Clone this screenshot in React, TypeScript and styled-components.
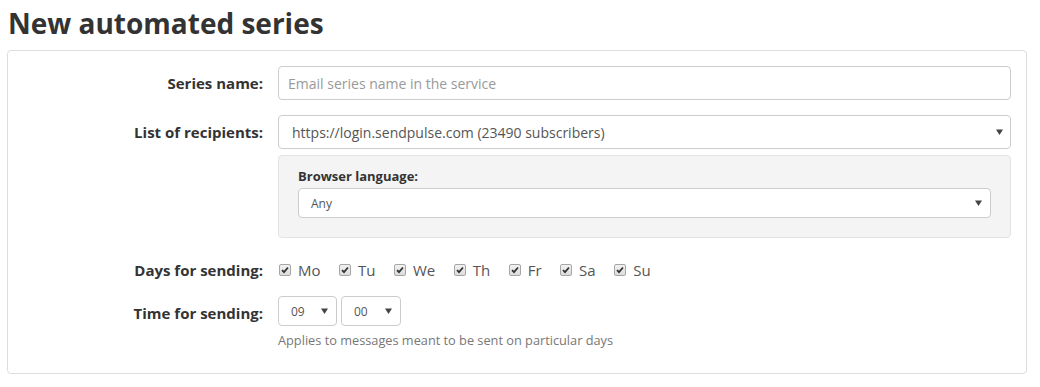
import styled, { createGlobalStyle } from "styled-components";

const Global = createGlobalStyle`
    body {
        margin: 0;
        background: #fff;
        font-family: "Open Sans", "Liberation Sans", sans-serif;
        color: #333;
    }
    * { box-sizing: border-box; }
`;

const Page = styled.div`
    padding: 4px 14px 0 7px;
`;

const Title = styled.h1`
    margin: 0 0 8px 1px;
    font-size: 28px;
    line-height: 38px;
    font-weight: 700;
    color: #333;
`;

const Card = styled.div`
    border: 1px solid #ddd;
    border-radius: 4px;
    padding: 15px 15px 24px 0;
    width: 1020px;
`;

const Row = styled.div<{ $mt?: number; $top?: boolean }>`
    display: grid;
    grid-template-columns: 255px 1fr;
    column-gap: 15px;
    align-items: ${(p) => (p.$top ? "start" : "center")};
    margin-top: ${(p) => p.$mt ?? 0}px;
`;

const Label = styled.label<{ $pt?: number }>`
    text-align: right;
    font-size: 15px;
    font-weight: 700;
    color: #333;
    line-height: 20px;
    padding-top: ${(p) => p.$pt ?? 0}px;
`;

const Control = styled.div`
    display: flex;
    flex-direction: column;
`;

const TextInput = styled.input`
    height: 34px;
    width: 100%;
    border: 1px solid #ccc;
    border-radius: 4px;
    padding: 6px 9px;
    font-family: inherit;
    font-size: 14px;
    color: #555;
    outline: none;
    &::placeholder { color: #999; }
`;

const SelectBox = styled.div<{ $small?: boolean; $w?: number }>`
    display: flex;
    align-items: center;
    justify-content: space-between;
    height: ${(p) => (p.$small ? 30 : 34)}px;
    width: ${(p) => (p.$w ? `${p.$w}px` : "100%")};
    border: 1px solid #ccc;
    border-radius: 4px;
    background: #fff;
    padding: ${(p) => (p.$small ? "0 8px 0 12px" : "0 7px 0 13px")};
    font-size: ${(p) => (p.$small ? 12 : 14)}px;
    color: #555;
`;

const Arrow = () => (
    <svg width="7" height="6" viewBox="0 0 7 6">
        <path d="M0 0.5 L7 0.5 L3.5 6 Z" fill="#444" />
    </svg>
);

const Panel = styled.div`
    margin-top: 6px;
    background: #f4f4f4;
    border: 1px solid #e3e3e3;
    border-radius: 4px;
    padding: 11px 19px 19px 19px;
`;

const PanelLabel = styled.div`
    font-size: 13px;
    font-weight: 700;
    color: #333;
    line-height: 19px;
    margin-bottom: 2px;
`;

const Days = styled.div`
    display: flex;
    align-items: center;
    gap: 17.5px;
    line-height: 20px;
`;

const Day = styled.label`
    display: flex;
    align-items: center;
    gap: 7px;
    font-size: 15px;
    color: #555;
`;

const Box = styled.span`
    display: inline-flex;
    align-items: center;
    justify-content: center;
    width: 12px;
    height: 12px;
    margin-left: 1px;
    border: 1px solid #a6a6a6;
    border-radius: 2px;
    background: linear-gradient(#f2f2f2, #dcdcdc);
`;

const TimeRow = styled.div`
    display: flex;
    gap: 4px;
`;

const Help = styled.div`
    margin-top: 5px;
    font-size: 12.75px;
    color: #777;
    line-height: 18px;
`;

const days = ["Mo", "Tu", "We", "Th", "Fr", "Sa", "Su"];

function Check() {
    return (
        <Box>
            <svg width="8" height="8" viewBox="0 0 8 8">
                <path d="M1 4.2 L3 6.2 L7 1.5" stroke="#333" strokeWidth="1.8" fill="none" />
            </svg>
        </Box>
    );
}

export default function App() {
    return (
        <Page>
            <Global />
            <Title>New automated series</Title>
            <Card>
                <Row>
                    <Label>Series name:</Label>
                    <TextInput placeholder="Email series name in the service" />
                </Row>
                <Row $mt={15} $top>
                    <Label $pt={7}>List of recipients:</Label>
                    <Control>
                        <SelectBox>
                            <span>https://login.sendpulse.com (23490 subscribers)</span>
                            <Arrow />
                        </SelectBox>
                        <Panel>
                            <PanelLabel>Browser language:</PanelLabel>
                            <SelectBox $small>
                                <span>Any</span>
                                <Arrow />
                            </SelectBox>
                        </Panel>
                    </Control>
                </Row>
                <Row $mt={22}>
                    <Label>Days for sending:</Label>
                    <Days>
                        {days.map((d) => (
                            <Day key={d}>
                                <Check />
                                {d}
                            </Day>
                        ))}
                    </Days>
                </Row>
                <Row $mt={16} $top>
                    <Label $pt={7}>Time for sending:</Label>
                    <Control>
                        <TimeRow>
                            <SelectBox $small $w={59}>
                                <span>09</span>
                                <Arrow />
                            </SelectBox>
                            <SelectBox $small $w={60}>
                                <span>00</span>
                                <Arrow />
                            </SelectBox>
                        </TimeRow>
                        <Help>Applies to messages meant to be sent on particular days</Help>
                    </Control>
                </Row>
            </Card>
        </Page>
    );
}
